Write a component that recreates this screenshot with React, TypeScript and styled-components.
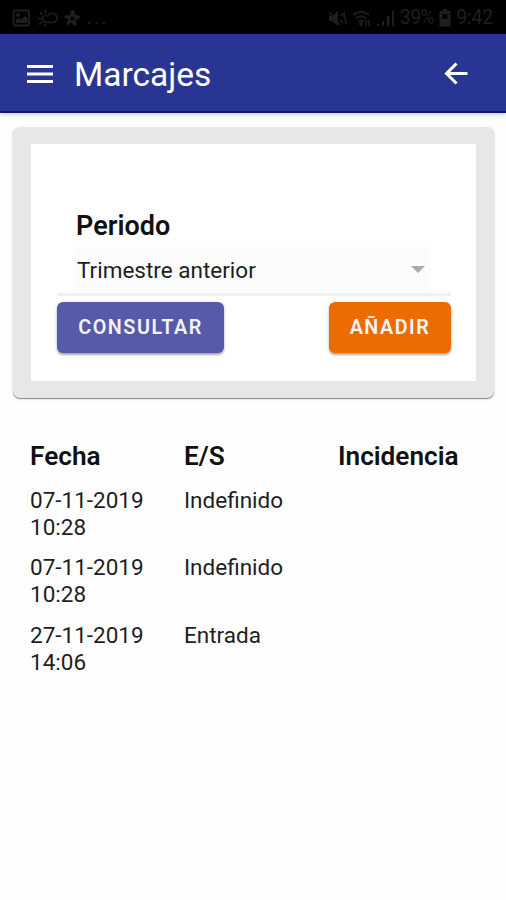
import React from 'react';
import styled, { createGlobalStyle } from 'styled-components';

const GlobalStyle = createGlobalStyle`
  * { box-sizing: border-box; }
  body {
    margin: 0;
    background: #fefefe;
    color: #1e1e1e;
    font-family: Roboto, 'Liberation Sans', sans-serif;
    font-size: 22.5px;
  }
`;

const Screen = styled.div`
  height: 900px;
  overflow: hidden;
`;

const StatusBar = styled.div`
  display: flex;
  align-items: center;
  justify-content: space-between;
  height: 34px;
  padding: 2px 13px 0 12px;
  background: #000;
  color: #1e1e1e;
`;

const StatusGroup = styled.div<{ $gap: number }>`
  display: flex;
  align-items: center;
  gap: ${(p) => p.$gap}px;
`;

const StatusText = styled.span<{ $spacing?: number }>`
  font-size: 19.5px;
  line-height: 24px;
  letter-spacing: ${(p) => p.$spacing ?? 0}px;
`;

const Toolbar = styled.header`
  display: flex;
  align-items: center;
  height: 79px;
  padding: 2px 38px 0 27px;
  background: #283593;
  border-bottom: 2px solid #12127c;
  box-shadow: 0 1px 5px rgba(40, 60, 120, 0.3);
  color: #fff;
`;

const Title = styled.h1`
  flex: 1;
  margin: 2px 0 0 21px;
  font-size: 33.5px;
  font-weight: 400;
  line-height: 40px;
`;

const IconButton = styled.button`
  display: flex;
  padding: 0;
  border: 0;
  background: none;
  color: inherit;
`;

const Card = styled.section`
  margin: 14px 12px 0 13px;
  height: 271px;
  padding: 17px 18px 18px;
  border-radius: 7px;
  background: #e7e7e7;
  box-shadow: 0 1px 1px rgba(0, 0, 0, 0.45), 0 1px 4px rgba(0, 0, 0, 0.08);
`;

const CardBody = styled.div`
  height: 237px;
  padding: 65px 25px 0 26px;
  background: #fff;
`;

const FieldLabel = styled.label`
  display: block;
  padding-left: 19px;
  font-size: 27px;
  font-weight: 600;
  line-height: 34px;
  color: #111;
`;

const SelectLine = styled.div`
  padding: 4px 21px 0 17px;
  height: 53px;
  border-bottom: 3px solid #f0f0f0;
`;

const Select = styled.div`
  display: flex;
  align-items: center;
  justify-content: space-between;
  height: 46px;
  padding: 0 5px 0 3px;
  background: #fcfcfc;
`;

const Actions = styled.div`
  display: flex;
  justify-content: space-between;
  padding-top: 6px;
`;

const Button = styled.button<{ $color: string; $width: number }>`
  width: ${(p) => p.$width}px;
  height: 51px;
  padding: 0;
  border: 0;
  border-radius: 6px;
  background: ${(p) => p.$color};
  box-shadow: 0 2px 2px rgba(0, 0, 0, 0.28), 0 1px 4px rgba(0, 0, 0, 0.12);
  color: #f3f3fa;
  font: 600 19.8px/50px Roboto, sans-serif;
  letter-spacing: 1.5px;
`;

const Table = styled.div`
  padding: 38px 0 0 30px;
`;

const Row = styled.div`
  display: grid;
  grid-template-columns: 154px 154px 1fr;
  margin-bottom: 13.5px;
  line-height: 27px;
`;

const HeadRow = styled(Row)`
  margin-bottom: 10.5px;
  font-size: 26.2px;
  font-weight: 600;
  line-height: 40px;
  color: #111;
`;

const DateCell = styled.div`
  width: 125px;
`;

const records = [
  { date: '07-11-2019', time: '10:28', kind: 'Indefinido' },
  { date: '07-11-2019', time: '10:28', kind: 'Indefinido' },
  { date: '27-11-2019', time: '14:06', kind: 'Entrada' },
];

const PictureIcon = () => (
  <svg width="19" height="18" viewBox="0 0 19 18" fill="none" stroke="currentColor" strokeWidth="1.8">
    <rect x="1.5" y="1.5" width="15.5" height="15" rx="1.5" />
    <path d="M3.5 14V11l3-2 2.5 2 4-4 2.5 2v5z" fill="currentColor" stroke="none" />
    <circle cx="6" cy="6" r="1" />
  </svg>
);

const WeatherIcon = () => (
  <svg width="21" height="16" viewBox="0 0 21 16" fill="none" stroke="currentColor" strokeWidth="1.6">
    <path d="M10 12.500h5.500a4.300 4.300 0 0 0 0-9h-2q-2.500.5-3 3M9 5.500a3 3 0 0 0-3 4.500q1 2.500 4 2.500M4.500 8.500H0M5.500 4.500 3 2M8.500 3.500V0M5 12l-3 2.500M8 14v2" />
  </svg>
);

const PinwheelIcon = () => (
  <svg width="17" height="17" viewBox="0 0 17 17" fill="currentColor">
    <path d="M7 0q5 0 4 4.500L16 6q0 4-4.500 3.500L13 15q-4 1.500-5.500-2.500L3 15.500q-1-4 2-6L0 7.500q2-3.500 6-2zM8.500 6.500a2 2 0 1 0 0 4 2 2 0 0 0 0-4" fillRule="evenodd" />
  </svg>
);

const MuteIcon = () => (
  <svg width="19" height="17" viewBox="0 0 19 17" fill="none" stroke="currentColor" strokeWidth="1.6">
    <path d="M1 6h3l6-5v15l-6-5H1z" fill="currentColor" stroke="none" />
    <path d="M1 2l11 13M12 6l3-3M12 10l3 3M17 2q-2 3 0 6.500t0 6" />
  </svg>
);

const WifiIcon = () => (
  <svg width="20" height="17" viewBox="0 0 20 17" fill="none" stroke="currentColor" strokeWidth="2">
    <path d="M1 5q8-6.500 16 0M4 8.500q5-4.500 10 0M6.500 11.500q2.500-2 5 0" />
    <circle cx="9" cy="14" r="1" fill="currentColor" />
    <path d="M14 10v6M17 10v6" strokeWidth="1.500" />
  </svg>
);

const SignalIcon = () => (
  <svg width="18" height="18" viewBox="0 0 18 18" fill="currentColor">
    <path d="M0 15h2v2H0zM5 12h2v5H5zM10 7h2.500v10H10zM15 2h2v15h-2z" />
  </svg>
);

const BatteryIcon = () => (
  <svg width="12" height="18" viewBox="0 0 12 18" fill="currentColor">
    <path fillRule="evenodd" d="M4 0h4v2h3.500v15.500H.5V2H4zM3.500 5v5h5V5z" />
  </svg>
);

const MenuIcon = () => (
  <svg width="26" height="20" viewBox="0 0 26 20" stroke="currentColor" strokeWidth="3">
    <path d="M0 2.500h26M0 10h26M0 17.500h26" />
  </svg>
);

const BackIcon = () => (
  <svg width="24" height="23" viewBox="0 0 24 23" fill="none" stroke="currentColor" strokeWidth="3">
    <path d="M23.500 11.500H3M12.500 1.500l-10 10 10 10" />
  </svg>
);

const CaretIcon = () => (
  <svg width="14" height="8" viewBox="0 0 14 8">
    <path d="M0 0h14l-7 7z" fill="#aaa" />
  </svg>
);

export default function App() {
  return (
    <Screen>
      <GlobalStyle />
      <StatusBar>
        <StatusGroup $gap={6}>
          <PictureIcon />
          <WeatherIcon />
          <PinwheelIcon />
          <StatusText $spacing={2}>...</StatusText>
        </StatusGroup>
        <StatusGroup $gap={5}>
          <MuteIcon />
          <WifiIcon />
          <SignalIcon />
          <StatusText $spacing={-0.6}>39%</StatusText>
          <BatteryIcon />
          <StatusText $spacing={-0.2}>9:42</StatusText>
        </StatusGroup>
      </StatusBar>
      <Toolbar>
        <IconButton aria-label="Menú"><MenuIcon /></IconButton>
        <Title>Marcajes</Title>
        <IconButton aria-label="Volver"><BackIcon /></IconButton>
      </Toolbar>
      <Card>
        <CardBody>
          <FieldLabel>Periodo</FieldLabel>
          <SelectLine>
            <Select>
              <span>Trimestre anterior</span>
              <CaretIcon />
            </Select>
          </SelectLine>
          <Actions>
            <Button $color="#555aa9" $width={167}>CONSULTAR</Button>
            <Button $color="#ed6c02" $width={122}>AÑADIR</Button>
          </Actions>
        </CardBody>
      </Card>
      <Table>
        <HeadRow>
          <span>Fecha</span>
          <span>E/S</span>
          <span>Incidencia</span>
        </HeadRow>
        {records.map((r, i) => (
          <Row key={i}>
            <DateCell>{r.date} {r.time}</DateCell>
            <span>{r.kind}</span>
          </Row>
        ))}
      </Table>
    </Screen>
  );
}
